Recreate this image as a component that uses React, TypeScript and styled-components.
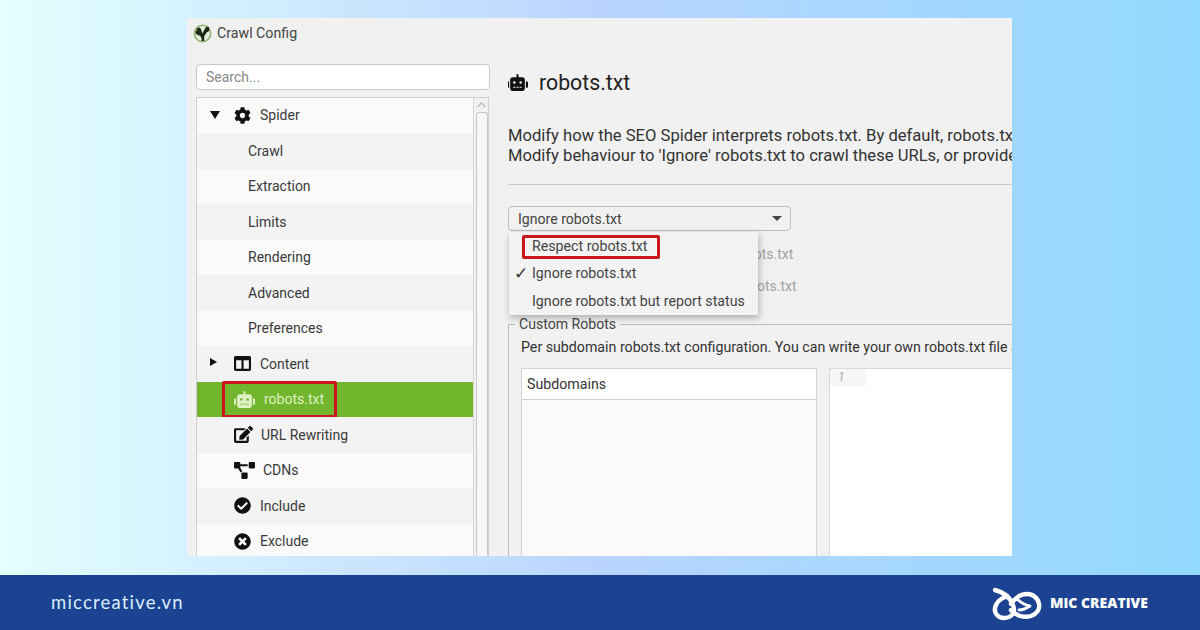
import React from 'react';
import styled, { createGlobalStyle } from 'styled-components';
import { FaCog, FaRobot, FaColumns, FaEdit, FaCheckCircle, FaTimesCircle, FaProjectDiagram } from 'react-icons/fa';

const Global = createGlobalStyle`
  html, body { margin: 0; padding: 0; }
  body { width: 1200px; height: 630px; overflow: hidden; font-family: Roboto, "Liberation Sans", sans-serif; }
`;

const Page = styled.div`
  width: 1200px; height: 630px; display: flex; flex-direction: column;
`;
const Stage = styled.div`
  height: 575px; box-sizing: border-box; padding: 18px 188px 19px 187px;
  background: linear-gradient(90deg, #e3ffff 0%, #b9d5ff 50%, #92d9ff 100%);
`;
const Footer = styled.footer`
  height: 55px; background: #1b4391; display: flex; align-items: center; justify-content: space-between;
  padding: 0 52px 0 51px; box-sizing: border-box;
`;
const Site = styled.div`
  font-family: Lato, sans-serif; font-size: 18.5px; letter-spacing: 1.2px; color: #dbeeff; padding-bottom: 2px;
`;
const Brand = styled.div`
  display: flex; align-items: center; gap: 3px; color: #fff; font-family: "Open Sans", sans-serif;
  font-weight: 800; font-size: 14px; letter-spacing: 0;
`;
const Win = styled.div`
  width: 825px; height: 538px; background: #f1f1f1; display: grid; grid-template-columns: 321px 504px; position: relative; overflow: hidden;
  color: #333;
`;
const Left = styled.div`
  display: flex; flex-direction: column; overflow: hidden;
`;
const TitleBar = styled.div`
  height: 34px; display: flex; align-items: center; gap: 5px; padding-left: 6px; font-size: 14.2px; color: #444; padding-bottom: 4px; box-sizing: border-box; flex: none;
`;
const Search = styled.div`
  margin: 12px 0 0 9px; width: 294px; height: 26px; box-sizing: border-box; background: #fff; border: 1px solid #c6c6c6; border-radius: 4px;
  font-size: 14px; color: #888; padding: 0 0 0 9px; display: flex; align-items: center; flex: none;
`;
const TreeBox = styled.div`
  margin: 6.5px 0 0 9px; width: 293px; flex: 1; box-sizing: border-box; border: 1px solid #cfcfcf; border-bottom: 0; display: flex; overflow: hidden;
`;
const Tree = styled.div`
  width: 276px; flex: none; display: flex; flex-direction: column;
`;
const Row = styled.div<{ $shade?: boolean; $active?: boolean; $pad: number; $gap?: number }>`
  height: 35.5px; flex: none; display: flex; align-items: center; box-sizing: border-box; padding-left: ${p => p.$pad}px; gap: ${p => p.$gap ?? 8}px;
  font-size: 14px; background: ${p => (p.$active ? '#71b62c' : p.$shade ? '#f3f3f3' : '#fafafa')};
  color: ${p => (p.$active ? '#dff0c4' : '#3a3a3a')}; position: relative;
  svg { color: ${p => (p.$active ? '#dff0c4' : '#111')}; flex: none; }
`;
const Caret = styled.span<{ $open?: boolean }>`
  width: 0; height: 0; position: absolute; left: 13px; top: 13px;
  ${p => p.$open
    ? 'border-left: 5px solid transparent; border-right: 5px solid transparent; border-top: 8px solid #111;'
    : 'border-top: 4.5px solid transparent; border-bottom: 4.5px solid transparent; border-left: 7px solid #111; top: 12px;'}
`;
const Mark = styled.span`
  position: absolute; left: 25px; top: -1px; width: 115px; height: 37px; box-sizing: border-box; border: 3px solid #c8161d; border-radius: 2px;
`;
const Scroll = styled.div`
  width: 15px; flex: none; background: #f1f1f1; border-left: 1px solid #d8d8d8; display: flex; flex-direction: column; align-items: center; position: relative;
`;
const ScrollUp = styled.svg`
  margin-top: 3px; flex: none;
`;
const Thumb = styled.div`
  width: 12px; flex: 1; margin-top: 3px; box-sizing: border-box; border: 1px solid #c9c9c9; border-bottom: 0; border-radius: 3px 3px 0 0; background: #f7f7f7;
`;
const Right = styled.div`
  display: flex; flex-direction: column; overflow: hidden; position: relative;
`;
const Heading = styled.div`
  height: 28px; margin-top: 50px; display: flex; align-items: center; gap: 11px; font-size: 21.3px; color: #222; flex: none;
  svg { color: #111; margin-left: -1px; }
`;
const Para = styled.div`
  margin-top: 30px; font-size: 16.6px; line-height: 20px; color: #333; white-space: nowrap; flex: none;
`;
const Divider = styled.div`
  height: 1px; background: #c9c9c9; margin-top: 18px; flex: none;
`;
const Select = styled.div`
  margin-top: 21px; width: 283px; height: 25px; box-sizing: border-box; border: 1px solid #bdbdbd; border-radius: 4px; background: #f1f1f1;
  display: flex; align-items: center; justify-content: space-between; padding: 0 8px 0 9px; font-size: 14.1px; color: #444; flex: none;
`;
const SmallArrow = styled.span`
  width: 0; height: 0; border-left: 5px solid transparent; border-right: 5px solid transparent; border-top: 5px solid #444;
`;
const Options = styled.div`
  height: 93px; flex: none; position: relative;
`;
const Ghost = styled.div<{ $row: number }>`
  position: absolute; left: 31px; top: ${p => p.$row}px; font-size: 14px; color: #a3a3a3; white-space: nowrap;
`;
const Menu = styled.div`
  position: absolute; left: 322px; top: 214px; width: 249px; height: 83px; background: #f3f3f3; box-shadow: 1px 3px 7px rgba(0,0,0,.28); z-index: 2; font-size: 14.2px; color: #444;
  display: flex; flex-direction: column; box-sizing: border-box;
`;
const MenuItem = styled.div`
  height: 27.6px; display: flex; align-items: center; padding-left: 23px; position: relative; white-space: nowrap;
`;
const Check = styled.span`
  position: absolute; left: 5px; font-size: 17px; color: #333; font-family: "DejaVu Sans", sans-serif;
`;
const MenuMark = styled.span`
  position: absolute; left: 13px; top: 3px; width: 138px; height: 24px; box-sizing: border-box; border: 3px solid #c8161d; border-radius: 2px; box-shadow: inset 0 0 2px #fff;
`;
const Field = styled.div`
  flex: 1; border: 1px solid #bdbdbd; border-right: 0; border-bottom: 0; position: relative; padding: 13px 0 0 12px; display: flex; flex-direction: column; margin-right: -2px; min-height: 0;
`;
const Legend = styled.span`
  position: absolute; left: 6px; top: -9px; background: #f1f1f1; padding: 0 4px; font-size: 14.1px; line-height: 16px; color: #444;
`;
const FieldText = styled.div`
  font-size: 14.2px; line-height: 18px; color: #333; white-space: nowrap; flex: none;
`;
const Panes = styled.div`
  margin-top: 12px; flex: 1; display: grid; grid-template-columns: 296px 1fr; column-gap: 12px;
`;
const Pane = styled.div`
  background: #fafafa; border: 1px solid #d2d2d2; border-bottom: 0; display: flex; flex-direction: column;
`;
const PaneHead = styled.div`
  height: 30px; background: #fff; border-bottom: 1px solid #cfcfcf; padding-left: 5px; display: flex; align-items: center; font-size: 14.2px; color: #333; flex: none;
`;
const Editor = styled.div`
  background: #fff; border-left: 1px solid #d8d8d8; border-top: 1px solid #d8d8d8; position: relative;
`;
const LineNo = styled.div`
  width: 36px; height: 17px; background: #f6f6f6; font-size: 12px; font-style: italic; color: #aaa; padding-left: 8px; box-sizing: border-box; line-height: 17px;
`;

const TreeLogo = () => (
  <svg width="19" height="19" viewBox="0 0 19 19">
    <circle cx="9.5" cy="9.5" r="8.2" fill="#e6efdb" stroke="#8fb070" strokeWidth="1.6" />
    <path d="M8.6 17 C8.8 13.5 8 12 5 11 C2.5 10.5 1.5 7.5 3.5 6.5 C3.5 3.5 6.5 2.5 7.5 4.5 C8.5 6 8.8 8 9.6 9.5 C10.5 7 11.5 4.5 13.5 3 C14.5 1.5 17 3 16 5 C17 6.5 15.5 8 14 8 C13.5 9.5 12 10.5 11.2 12.5 L11.2 17 Z" fill="#1d2a16" />
  </svg>
);

const MicLogo = () => (
  <svg width="60" height="40" viewBox="0 0 60 40" fill="none" stroke="#fff" strokeLinecap="round" strokeLinejoin="round">
    <path d="M8 7 C16 9 23 14 26 22 C29 30 24 35 17 35 C11 35 7 30 8 25 C9 20 13 16 18 14" strokeWidth="4.4" />
    <path d="M24 27 C29 33 37 35 44 33 C50 31 53 26 52 21 C51 15 46 11 40 11 C33 11 28 15 24 21" strokeWidth="4.4" />
    <path d="M29 15 C33 19 37 22 43 23 C40 25 36 27 32 27" strokeWidth="2.8" />
  </svg>
);

export default function App() {
  return (
    <Page>
      <Global />
      <Stage>
        <Win>
          <Left>
            <TitleBar><TreeLogo />Crawl Config</TitleBar>
            <Search>Search...</Search>
            <TreeBox>
              <Tree>
                <Row $pad={37} $gap={9}><Caret $open /><FaCog size={17} />Spider</Row>
                <Row $pad={51} $shade>Crawl</Row>
                <Row $pad={51}>Extraction</Row>
                <Row $pad={51} $shade>Limits</Row>
                <Row $pad={51}>Rendering</Row>
                <Row $pad={51} $shade>Advanced</Row>
                <Row $pad={51}>Preferences</Row>
                <Row $pad={37} $gap={9} $shade><Caret /><FaColumns size={17} />Content</Row>
                <Row $pad={37} $gap={9} $active><FaRobot size={21} />robots.txt<Mark /></Row>
                <Row $pad={37} $gap={8} $shade><FaEdit size={19} />URL Rewriting</Row>
                <Row $pad={37} $gap={8}><FaProjectDiagram size={21} />CDNs</Row>
                <Row $pad={37} $gap={9} $shade><FaCheckCircle size={17} />Include</Row>
                <Row $pad={37} $gap={9}><FaTimesCircle size={17} />Exclude</Row>
              </Tree>
              <Scroll>
                <ScrollUp width="11" height="8" viewBox="0 0 11 8"><path d="M1.5 6 L5.5 2 L9.5 6" fill="none" stroke="#bbb" strokeWidth="1.4" /></ScrollUp>
                <Thumb />
              </Scroll>
            </TreeBox>
          </Left>
          <Right>
            <Heading><FaRobot size={21} />robots.txt</Heading>
            <Para>
              Modify how the SEO Spider interprets robots.txt. By default, robots.txt is respected and disallowed URLs will not be crawled.<br />
              Modify behaviour to 'Ignore' robots.txt to crawl these URLs, or provide your own custom robots.txt below for testing.
            </Para>
            <Divider />
            <Select>Ignore robots.txt<SmallArrow /></Select>
            <Options>
              <Ghost $row={15}>Show internal URLs blocked by robots.txt</Ghost>
              <Ghost $row={47}>Show external URLs blocked by robots.txt</Ghost>
            </Options>
            <Field>
              <Legend>Custom Robots</Legend>
              <FieldText>Per subdomain robots.txt configuration. You can write your own robots.txt file and test it against URLs below.</FieldText>
              <Panes>
                <Pane><PaneHead>Subdomains</PaneHead></Pane>
                <Editor><LineNo>1</LineNo></Editor>
              </Panes>
            </Field>
          </Right>
          <Menu>
            <MenuItem>Respect robots.txt<MenuMark /></MenuItem>
            <MenuItem><Check>✓</Check>Ignore robots.txt</MenuItem>
            <MenuItem>Ignore robots.txt but report status</MenuItem>
          </Menu>
        </Win>
      </Stage>
      <Footer>
        <Site>miccreative.vn</Site>
        <Brand><MicLogo />MIC CREATIVE</Brand>
      </Footer>
    </Page>
  );
}
